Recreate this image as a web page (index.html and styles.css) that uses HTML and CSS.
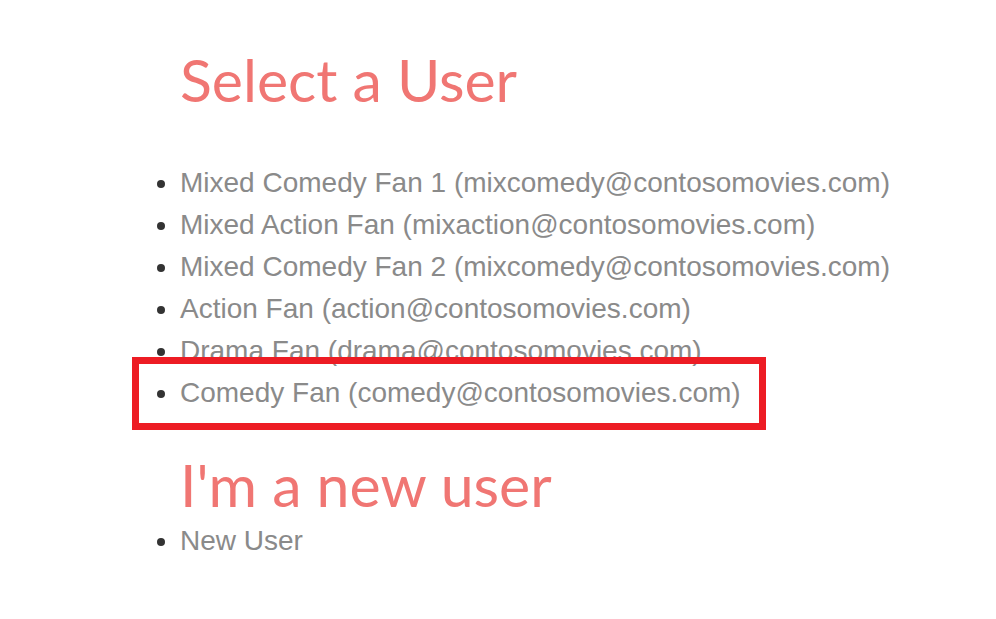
FILE: index.html
```html
<!DOCTYPE html>
<html lang="en">
<head>
<meta charset="utf-8">
<title>Select a User</title>
<link rel="stylesheet" href="styles.css">
</head>
<body>
<main class="page">
  <h1 class="title">Select a User</h1>
  <ul class="users">
    <li><a href="#">Mixed Comedy Fan 1 (mixcomedy@contosomovies.com)</a></li>
    <li><a href="#">Mixed Action Fan (mixaction@contosomovies.com)</a></li>
    <li><a href="#">Mixed Comedy Fan 2 (mixcomedy@contosomovies.com)</a></li>
    <li><a href="#">Action Fan (action@contosomovies.com)</a></li>
    <li><a href="#">Drama Fan (drama@contosomovies.com)</a></li>
    <li class="highlight"><a href="#">Comedy Fan (comedy@contosomovies.com)</a></li>
  </ul>
  <h1 class="title title-new">I'm a new user</h1>
  <ul class="users users-new">
    <li><a href="#">New User</a></li>
  </ul>
</main>
</body>
</html>
```
FILE: styles.css
```css
html, body {
  margin: 0;
  padding: 0;
  background: #ffffff;
}

.page {
  padding: 44px 0 0 180px;
}

.title {
  margin: 0;
  font-family: Lato, "Open Sans", sans-serif;
  font-weight: 400;
  font-size: 59px;
  line-height: normal;
  color: #f07673;
}

.title-new {
  margin-top: 35px;
}

.users {
  margin: 47px 0 0 0;
  padding: 0;
  list-style: disc outside;
  font-family: "Liberation Sans", Arial, sans-serif;
  font-size: 28px;
  line-height: 42px;
  color: #333333;
}

.users-new {
  margin-top: 0;
}

.users li {
  position: relative;
}

.users a {
  color: #8a8a8a;
  text-decoration: none;
}

.highlight::after {
  content: "";
  position: absolute;
  left: -48px;
  top: -15px;
  width: 620px;
  height: 59px;
  border: 7px solid #ed1c24;
}
```
